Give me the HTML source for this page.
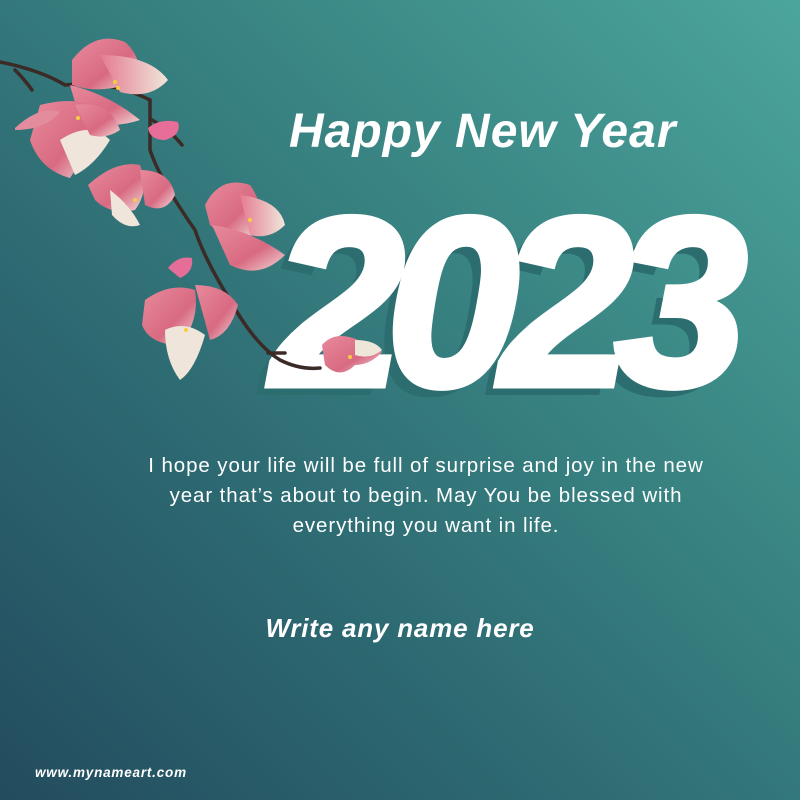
<!DOCTYPE html>
<html><head><meta charset="utf-8"><style>
html,body{margin:0;padding:0}
body{width:800px;height:800px;overflow:hidden;position:relative;font-family:"Liberation Sans",sans-serif;
background:linear-gradient(225deg,#4ca59d 0%,#3a8684 35%,#2d6a72 65%,#234c5e 100%);}
.t{position:absolute;color:#fff;white-space:nowrap}
</style></head><body>
<div class="t" style="left:289px;top:104px;font-size:48px;font-weight:bold;font-style:italic;letter-spacing:1px">Happy New Year</div>
<div class="t" style="left:272px;top:182px;font-size:240px;font-weight:bold;font-style:italic;line-height:1;letter-spacing:-18px;transform:scaleX(0.99);transform-origin:left top;-webkit-text-stroke:7px #fff;text-shadow:-12px 10px 0 #2c6d70">2023</div>
<div class="t" style="left:0;top:451px;width:852px;text-align:center;font-size:20.5px;line-height:30px;letter-spacing:0.9px">I hope your life will be full of surprise and joy in the new<br>year that’s about to begin. May You be blessed with<br>everything you want in life.</div>
<div class="t" style="left:0;width:800px;text-align:center;top:613px;font-size:26px;font-weight:bold;font-style:italic;letter-spacing:0.8px">Write any name here</div>
<div class="t" style="left:35px;top:765px;font-size:13.5px;font-weight:bold;font-style:italic;letter-spacing:0.8px">www.mynameart.com</div>
<svg style="position:absolute;left:0;top:0" width="400" height="400" viewBox="0 0 400 400">
<defs>
<linearGradient id="p" x1="0" y1="0" x2="1" y2="1"><stop offset="0" stop-color="#e88a9c"/><stop offset="0.6" stop-color="#d86a82"/><stop offset="1" stop-color="#f1d8d6"/></linearGradient>
<linearGradient id="w" x1="0" y1="0" x2="1" y2="0"><stop offset="0" stop-color="#e57b91"/><stop offset="1" stop-color="#efe6da"/></linearGradient>
</defs>
<g fill="none" stroke="#3b2a26" stroke-width="3.5" stroke-linecap="round">
<path d="M0 62 Q40 70 65 85 Q110 80 150 100 Q150 130 150 150 Q160 180 195 230 Q205 260 230 300 Q255 345 280 360 Q300 370 320 368"/>
<path d="M15 70 Q25 80 32 90"/><path d="M152 120 Q170 130 182 145"/>
<path d="M268 353 L285 353"/>
</g>
<g>
<path d="M72 60 Q95 30 125 42 Q145 60 135 82 Q100 95 72 85Z" fill="url(#p)"/>
<path d="M100 55 Q150 55 168 80 Q150 100 120 92Z" fill="url(#w)"/>
<path d="M70 85 Q110 95 140 120 Q110 130 80 120Z" fill="url(#p)"/>
<path d="M40 105 Q80 95 95 110 Q90 150 70 178 Q40 170 30 140Z" fill="url(#p)"/>
<path d="M15 128 Q40 105 60 112 Q45 130 15 130Z" fill="#e38c9e"/>
<path d="M60 140 Q90 120 110 140 Q95 165 75 175Z" fill="#efe5da"/>
<path d="M75 105 Q110 100 120 130 Q105 140 90 135Z" fill="url(#p)"/>
<path d="M148 128 Q160 118 178 122 Q182 135 165 140 Q150 140 148 128Z" fill="#e86e9a"/>
<path d="M88 185 Q115 160 140 165 Q150 190 135 210 Q110 215 95 200Z" fill="url(#p)"/>
<path d="M140 170 Q170 170 175 195 Q165 215 145 205Z" fill="url(#p)"/>
<path d="M110 190 Q130 205 140 225 Q125 230 112 215Z" fill="#efe5da"/>
<path d="M205 205 Q220 175 250 185 Q268 210 255 235 Q225 240 210 225Z" fill="url(#p)"/>
<path d="M240 195 Q280 200 285 225 Q270 240 250 235Z" fill="url(#w)"/>
<path d="M212 225 Q250 230 285 255 Q260 280 230 265Z" fill="url(#p)"/>
<path d="M168 268 Q178 255 192 258 Q194 272 180 278Z" fill="#e56e98"/>
<path d="M145 300 Q170 282 195 290 Q200 320 180 345 Q150 345 142 325Z" fill="url(#p)"/>
<path d="M195 285 Q225 285 238 305 Q230 335 210 340Z" fill="url(#p)"/>
<path d="M165 330 Q185 320 205 335 Q195 370 180 380 Q165 360 165 330Z" fill="#efe5da"/>
<path d="M322 345 Q335 330 358 340 Q378 345 382 352 Q370 365 355 365 Q340 380 325 365Z" fill="url(#p)"/>
<path d="M355 340 Q375 340 382 350 Q370 360 355 355Z" fill="#efe6da"/>
</g>
<g fill="#f4d03f"><circle cx="115" cy="82" r="2"/><circle cx="118" cy="88" r="2"/><circle cx="78" cy="118" r="2"/><circle cx="135" cy="200" r="2"/><circle cx="250" cy="220" r="2"/><circle cx="186" cy="330" r="2"/><circle cx="350" cy="357" r="2"/></g>
</svg>
</body></html>
